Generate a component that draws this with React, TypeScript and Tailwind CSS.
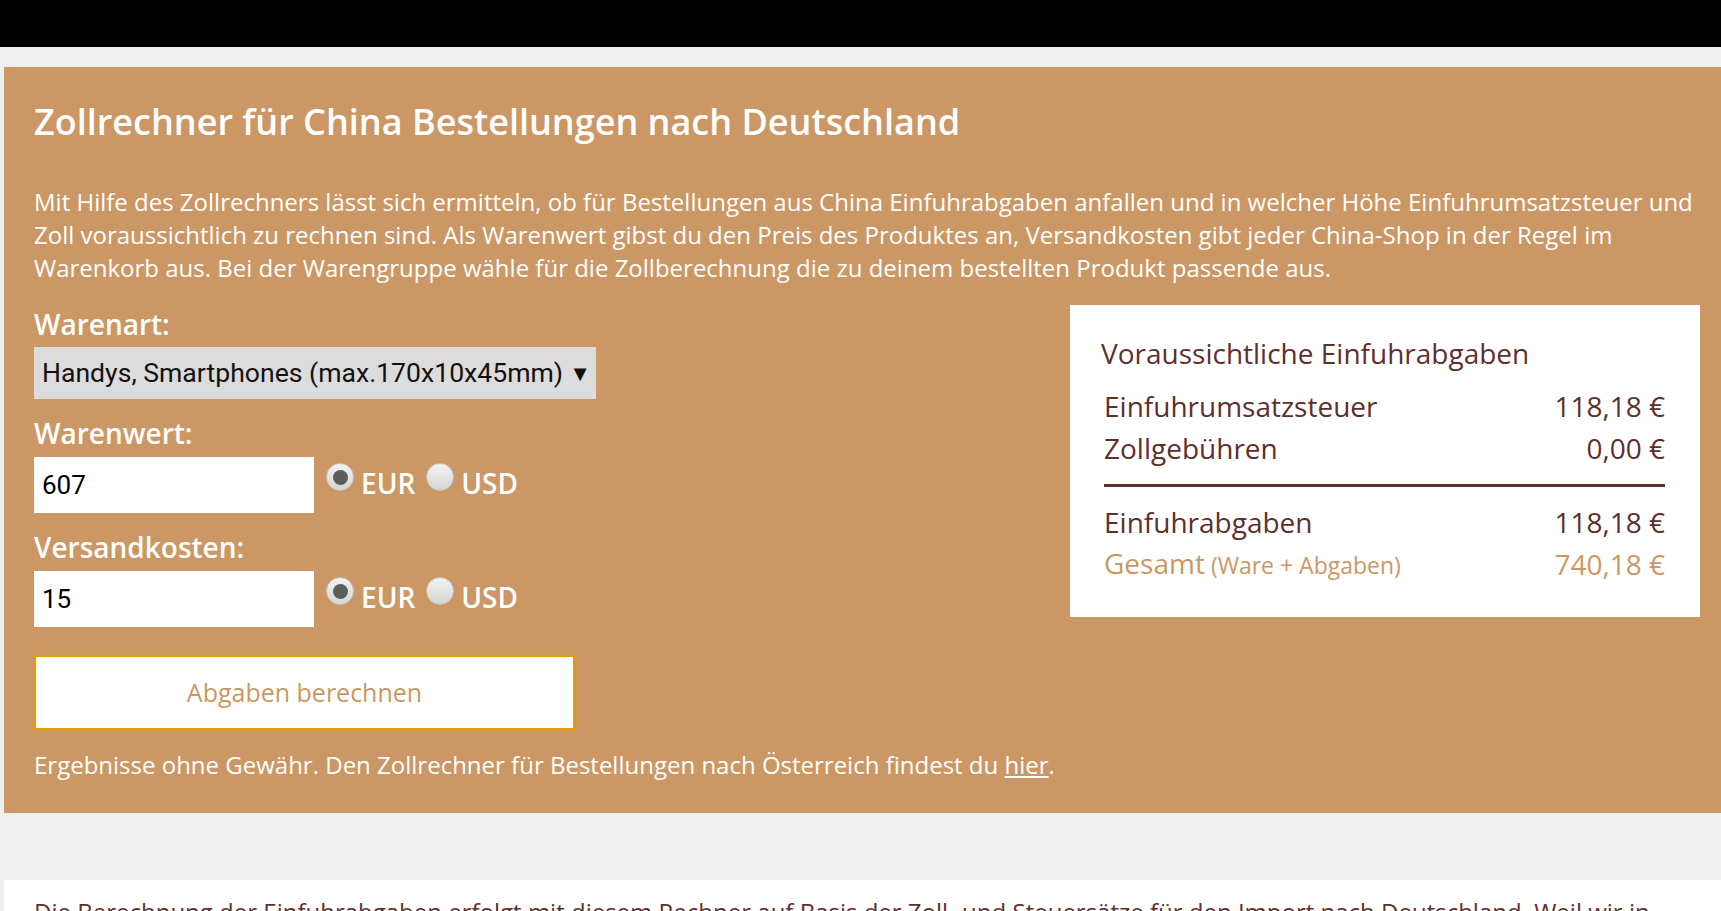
import React from "react";

function Radio({ checked }: { checked: boolean }) {
  return (
    <span className="mt-[6px] flex h-[28px] w-[28px] shrink-0 items-center justify-center rounded-full border border-[#c4c4c4] bg-gradient-to-b from-[#f2f2f2] to-[#d6d6d6]">
      {checked ? <span className="h-[15px] w-[15px] rounded-full bg-[#5c5c5c]" /> : null}
    </span>
  );
}

function AmountRow({ value }: { value: string }) {
  return (
    <div className="flex items-start">
      <div className="flex h-[56px] w-[280px] items-center bg-white pl-[8px] font-['Roboto',sans-serif] text-[26px] text-black">
        {value}
      </div>
      <div className="ml-[12px] flex items-start">
        <Radio checked={true} />
        <span className="ml-[7px] mt-[8px] text-[28px] font-semibold leading-[36px] text-white">EUR</span>
        <span className="ml-[11px]">
          <Radio checked={false} />
        </span>
        <span className="ml-[7px] mt-[8px] text-[28px] font-semibold leading-[36px] text-white">USD</span>
      </div>
    </div>
  );
}

function ResultRow({ label, value, small, accent }: { label: string; value: string; small?: string; accent?: boolean }) {
  return (
    <div className={`flex h-[42px] items-center justify-between text-[28px] leading-[42px] ${accent ? "text-[#cb9765]" : "text-[#5e2f2c]"}`}>
      <span>
        {label}
        {small ? <span className="text-[23px]"> {small}</span> : null}
      </span>
      <span>{value}</span>
    </div>
  );
}

export default function App() {
  return (
    <div className="min-h-screen overflow-hidden bg-[#efefef] font-['Open_Sans','Liberation_Sans',sans-serif]">
      <div className="h-[47px] bg-black" />
      <div className="pl-[4px] pt-[20px]">
        <div className="bg-[#cb9765] pb-[32px] pl-[30px] pr-[21px] pt-[32px] text-white">
          <h1 className="text-[36px] font-semibold leading-[46px]">
            Zollrechner für China Bestellungen nach Deutschland
          </h1>
          <div className="mt-[40px] text-[24px] leading-[33px]">
            <span className="block whitespace-nowrap">
              Mit Hilfe des Zollrechners lässt sich ermitteln, ob für Bestellungen aus China Einfuhrabgaben anfallen und in welcher Höhe Einfuhrumsatzsteuer und
            </span>
            <span className="block whitespace-nowrap">
              Zoll voraussichtlich zu rechnen sind. Als Warenwert gibst du den Preis des Produktes an, Versandkosten gibt jeder China-Shop in der Regel im
            </span>
            <span className="block whitespace-nowrap">
              Warenkorb aus. Bei der Warengruppe wähle für die Zollberechnung die zu deinem bestellten Produkt passende aus.
            </span>
          </div>
          <div className="mt-[21px] flex items-start justify-between">
            <div className="flex flex-col">
              <div className="mt-[1px] text-[28px] font-semibold leading-[36px]">Warenart:</div>
              <div className="mt-[5px] flex h-[52px] w-[562px] items-center justify-between bg-[#dcdcdc] pl-[8px] pr-[5px] font-['Roboto',sans-serif] text-[26.6px] text-[#151010]">
                <span>Handys, Smartphones (max.170x10x45mm)</span>
                <span className="text-[22px]">▼</span>
              </div>
              <div className="mt-[16px] text-[28px] font-semibold leading-[36px]">Warenwert:</div>
              <div className="mt-[6px]">
                <AmountRow value="607" />
              </div>
              <div className="mt-[16px] text-[28px] font-semibold leading-[36px]">Versandkosten:</div>
              <div className="mt-[6px]">
                <AmountRow value="15" />
              </div>
              <button className="mt-[28px] flex h-[75px] w-[541px] items-center justify-center border-2 border-[#e69c00] bg-white text-[25px] text-[#c99763]">
                Abgaben berechnen
              </button>
            </div>
            <div className="h-[312px] w-[630px] bg-white pb-[34px] pl-[31px] pr-[35px] pt-[27px]">
              <div className="text-[28px] leading-[42px] text-[#5e2f2c]">Voraussichtliche Einfuhrabgaben</div>
              <div className="mt-[11px] pl-[3px]">
                <ResultRow label="Einfuhrumsatzsteuer" value="118,18 €" />
                <ResultRow label="Zollgebühren" value="0,00 €" />
                <div className="mt-[15px] h-[3px] bg-[#5e2f2c]" />
                <div className="mt-[14px]">
                  <ResultRow label="Einfuhrabgaben" value="118,18 €" />
                  <ResultRow label="Gesamt" small="(Ware + Abgaben)" value="740,18 €" accent />
                </div>
              </div>
            </div>
          </div>
          <div className="mt-[18px] text-[24px] leading-[33px]">
            Ergebnisse ohne Gewähr. Den Zollrechner für Bestellungen nach Österreich findest du <span className="underline">hier</span>.
          </div>
        </div>
      </div>
      <div className="ml-[4px] mt-[67px] bg-white pb-[40px] pl-[30px] pt-[15px] text-[24px] leading-[33px] text-[#5e2f2c]">
        <span className="whitespace-nowrap">
          Die Berechnung der Einfuhrabgaben erfolgt mit diesem Rechner auf Basis der Zoll- und Steuersätze für den Import nach Deutschland. Weil wir in
        </span>
      </div>
    </div>
  );
}
